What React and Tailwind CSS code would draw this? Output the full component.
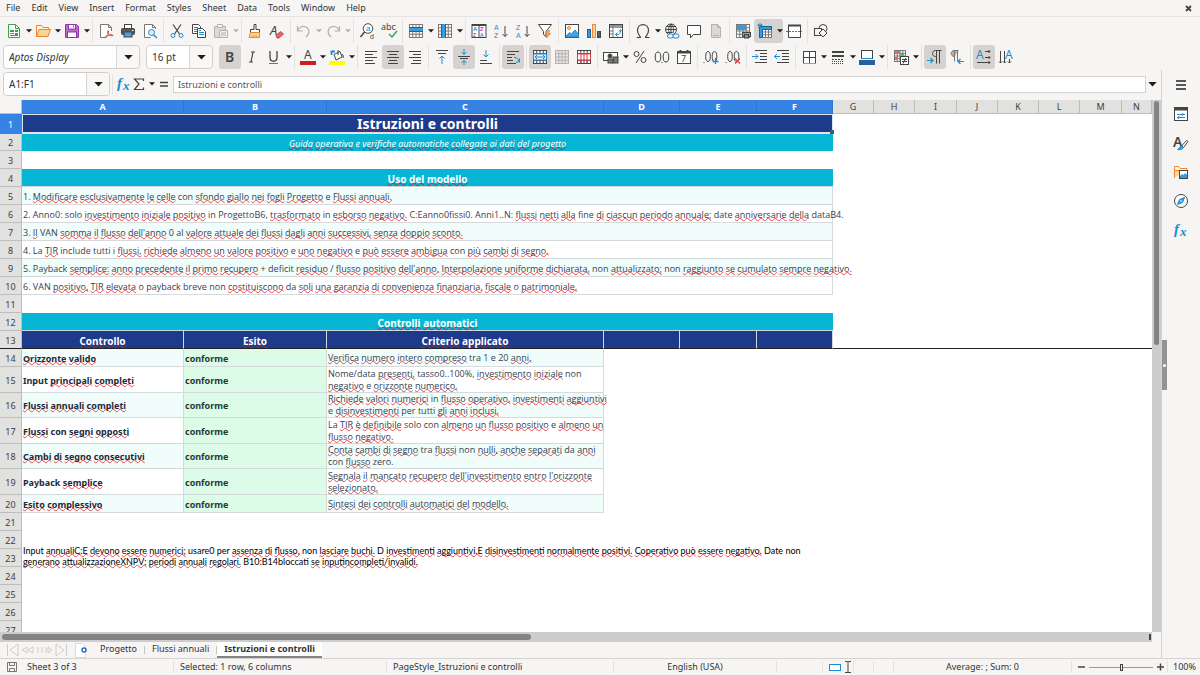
import React, { useState } from 'react';
import clsx from 'clsx';

const INK = '#444442';
const BLUE = '#1e8bcd';
const GREY = '#797774';
const PALE = '#b4b2af';
const RED = '#e03b44';
const ORANGE = '#ed8733';

const Svg = ({ children, w = 16, h = 16, stroke = INK }) => (
  <svg width={w} height={h} viewBox={`0 0 ${w} ${h}`} fill="none" stroke={stroke} strokeWidth="1" className="block shrink-0 overflow-visible" aria-hidden="true">
    {children}
  </svg>
);

const Glyph = ({ x, y, size, fill = INK, weight = 400, italic, narrow, children }) => (
  <text x={x} y={y} fontSize={size} fill={fill} stroke="none" fontWeight={weight} fontStyle={italic ? 'italic' : 'normal'} fontFamily={narrow ? 'Liberation Sans, sans-serif' : 'Noto Sans, sans-serif'}>
    {children}
  </text>
);

const Grid = ({ c = GREY, x = 1.5, y = 1.5, w = 13, h = 13, fill = '#fff' }) => (
  <>
    <rect x={x} y={y} width={w} height={h} fill={fill} stroke={c} />
    <path stroke={c} d={`M${x + w / 4} ${y}v${h}M${x + w / 2} ${y}v${h}M${x + (w * 3) / 4} ${y}v${h}M${x} ${y + h / 4}h${w}M${x} ${y + h / 2}h${w}M${x} ${y + (h * 3) / 4}h${w}`} />
  </>
);

const ICONS = {
  newDoc: (
    <Svg stroke="#3f9e4d">
      <path d="M2.500 1.500h7l4 4v9h-11z" fill="#fff" /><path d="M9.500 1.500v4h4" />
      <rect x="4" y="7" width="8" height="6" fill="#3f9e4d" stroke="none" />
      <path stroke="#fff" d="M4 9.500h8M4 11.500h5M8.500 7v4" />
    </Svg>
  ),
  open: (
    <Svg stroke={ORANGE}>
      <path d="M1.500 13.500v-11h5l1.500 2h5.500v2" fill="#fdf6e8" /><path d="M1.500 13.500l2.500-7h11.500l-2.500 7z" fill="#f9d694" />
    </Svg>
  ),
  save: (
    <Svg stroke="#9036a8">
      <path d="M1.500 1.500h11l2 2v11h-13z" fill="#b86bcb" /><rect x="4.500" y="1.500" width="7" height="4.500" fill="#fff" />
      <rect x="3.500" y="9" width="9" height="5.500" fill="#fff" /><path d="M9.500 2.500v2" />
    </Svg>
  ),
  pdf: (
    <Svg stroke={GREY}>
      <path d="M13.500 8V4.500l-3-3h-8v13h6" fill="#fff" /><path d="M10.500 1.500v3h3" />
      <path stroke={RED} d="M7 14.500c2-1 4-4.500 3.500-6.500-.8-1-1.200.5-.5 2 1 2.500 3.500 3 5 2.500-.5-1.500-5-.5-8 2z" />
    </Svg>
  ),
  print: (
    <Svg>
      <rect x="4.500" y="1.500" width="7" height="4" fill="#fff" /><rect x="1.500" y="5.500" width="13" height="6" rx="1" fill="#5c5a57" />
      <rect x="4" y="9" width="8" height="5" fill="#4aa3df" stroke={INK} /><path stroke="#fff" d="M12 7.500h1.500" />
    </Svg>
  ),
  preview: (
    <Svg stroke={GREY}>
      <path d="M13.500 6V4.500l-3-3h-8v13h6" fill="#fff" /><path d="M10.500 1.500v3h3" />
      <circle cx="9.500" cy="9.500" r="3" stroke={BLUE} fill="#d8ecf8" /><path stroke={BLUE} strokeWidth="1.500" d="M11.500 12l3.500 3" />
    </Svg>
  ),
  cut: (
    <Svg>
      <path strokeWidth="1.200" d="M4 1.500l6.500 9.500M12 1.500L5.500 11" /><circle cx="4" cy="12.500" r="2" stroke={BLUE} /><circle cx="12" cy="12.500" r="2" stroke={BLUE} />
    </Svg>
  ),
  copy: (
    <Svg>
      <path fill="#fff" d="M1.500 1.500h6l2 2v7h-8z" /><path stroke={BLUE} d="M3 4.500h4M3 6.500h3M3 8.500h3" />
      <path fill="#fff" d="M6.500 5.500h5l3 3v6h-8z" /><path stroke={BLUE} d="M8 9.500h5M8 11.500h5M8 7.500h2" />
    </Svg>
  ),
  paste: (
    <Svg stroke={PALE}>
      <path fill="#dcdad8" d="M1.500 3.500h11v11h-11z" /><path fill="#f6f5f4" d="M4.500 1.500h5v3h-5z" /><path fill="#eee" d="M6.500 7.500h8v7h-8z" /><path d="M8 10h5M8 12h5" />
    </Svg>
  ),
  brush: (
    <Svg>
      <path fill="#fff" d="M7 1.500h2v5h3.500v3h-9v-3H7z" /><path stroke={ORANGE} fill="#f9d694" d="M3.500 9.500h9v5h-10.500z" /><path stroke={ORANGE} d="M6 14v-2M9 14v-2" />
    </Svg>
  ),
  clear: (
    <Svg>
      <Glyph x="1" y="12" size="13" italic>A</Glyph><path stroke={RED} fill="#e8646b" d="M7 12.500l4.500-4 3 2.500-4.500 4h-2z" />
    </Svg>
  ),
  undo: <Svg stroke={PALE}><path strokeWidth="1.200" d="M1.500 3v5H6.500M1.500 8c1.500-4 5-5.500 8.500-4s4 7 0 10" /></Svg>,
  redo: <Svg stroke={PALE}><path strokeWidth="1.200" d="M14.500 3v5H9.500M14.500 8c-1.500-4-5-5.500-8.500-4s-4 7 0 10" /></Svg>,
  find: (
    <Svg>
      <circle cx="9" cy="5.500" r="4.800" fill="#fff" /><path strokeWidth="1.500" d="M5.500 9L1.500 14" />
      <Glyph x="7" y="8" size="8" narrow fill={BLUE}>a</Glyph><Glyph x="11" y="16" size="7" narrow>d</Glyph>
    </Svg>
  ),
  spell: (
    <Svg w={17}>
      <Glyph x="0" y="7" size="9">abc</Glyph><path stroke="#3f9e4d" strokeWidth="1.400" d="M8 11l3 3 5-6" />
    </Svg>
  ),
  row: <Svg><Grid /><rect x="1" y="5" width="14" height="4" fill="#3a9bdc" stroke="none" /><path stroke="#1565a0" d="M1 4.500h14M1 8.500h14" /></Svg>,
  col: <Svg><Grid /><rect x="5" y="1" width="4" height="14" fill="#3a9bdc" stroke="none" /><path stroke="#1565a0" d="M4.500 1v14M8.500 1v14" /></Svg>,
  sort: (
    <Svg>
      <rect x="1" y="1.500" width="14" height="13" fill="#fff" /><path strokeWidth="2" d="M1 2h14" /><path d="M8 2v13" />
      <Glyph x="2" y="8" size="6" narrow weight={600} fill={BLUE}>A</Glyph><Glyph x="2" y="14" size="5" narrow weight={600} fill="#b23bc4">Z</Glyph>
      <Glyph x="9" y="8" size="6" narrow weight={600} fill="#b23bc4">Z</Glyph><Glyph x="9" y="14" size="5" narrow weight={600} fill={BLUE}>A</Glyph>
    </Svg>
  ),
  az: (
    <Svg><Glyph x="1" y="7" size="7" narrow fill={BLUE}>A</Glyph><Glyph x="1" y="15" size="7" narrow fill="#b23bc4">Z</Glyph><path d="M12 3v10.500M9.500 11l2.500 2.500 2.500-2.500" /></Svg>
  ),
  za: (
    <Svg><Glyph x="1" y="7" size="7" narrow fill="#b23bc4">Z</Glyph><Glyph x="1" y="15" size="7" narrow fill={BLUE}>A</Glyph><path d="M12 3v10.500M9.500 11l2.500 2.500 2.500-2.500" /></Svg>
  ),
  filter: (
    <Svg><path fill="#fff" d="M1.500 1.500h13L9 8.500v5l-2.500-2v-3z" /><path stroke={ORANGE} fill="#f9b75c" d="M11.500 7.500l-3 4h2l-1 3.500 4-4.500h-2l1-3z" /></Svg>
  ),
  image: (
    <Svg><rect x="1.500" y="1.500" width="13" height="13" fill="#fff" /><circle cx="5" cy="5" r="1.500" stroke={ORANGE} fill="#f9d694" /><path stroke={BLUE} fill="#4aa3df" d="M2 13l3.500-3.500 2 1.500 3.500-4 3.500 4.500V14H2z" /></Svg>
  ),
  chart: (
    <Svg><rect x="1.500" y="6.500" width="3" height="8" fill="#3a9bdc" stroke="#1565a0" /><rect x="6.500" y="1.500" width="3" height="13" fill="#f9d694" stroke={ORANGE} /><rect x="11.500" y="8.500" width="3" height="6" fill="#5c5a57" /></Svg>
  ),
  pivot: (
    <Svg><rect x="1.500" y="1.500" width="13" height="13" fill="#fff" /><rect x="2" y="2" width="12" height="3" fill="#9a9896" stroke="none" /><path stroke={GREY} d="M5 2v12M2 8h3M2 11h3" /><path stroke={BLUE} d="M7.500 11.500h2c2 0 3-1 3-4M7.500 11.500l2-1.500M7.500 11.500l2 2M11 8.500l1.500-2 1.500 2" /></Svg>
  ),
  omega: <Svg><path strokeWidth="1.200" d="M1.500 14.500h4c-.3-1.500-3-3-3-7C2.500 4 5 1.700 8 1.700S13.500 4 13.500 7.500c0 4-2.700 5.500-3 7h4" /></Svg>,
  link: (
    <Svg><circle cx="7" cy="6.500" r="5.500" /><path d="M7 1v9M1.500 6.500h11M2.500 3.500h9M2.500 9.500h6M7 1C4 4 4 8 6 11M7 1c3 3 3 6 2 9" /><rect x="3.500" y="11" width="6" height="4" rx="2" stroke={BLUE} fill="#f6f5f4" /><rect x="9" y="11" width="6" height="4" rx="2" stroke={BLUE} fill="#f6f5f4" /></Svg>
  ),
  comment: <Svg><path fill="#fff" d="M1.500 2.500h13v9h-7L4.500 15v-3.500h-3z" /></Svg>,
  header: <Svg stroke={PALE}><path fill="#dcdad8" d="M3.500 1.500h6l3 3v10h-9z" /><path d="M9.500 1.500v3h3M5 12.500h6" /></Svg>,
  printRange: (
    <Svg><Grid /><rect x="2" y="2" width="9" height="5" fill="#3a9bdc" stroke="none" /><rect x="7.500" y="9.500" width="8" height="4" fill="#8aa" /><rect x="9.500" y="11.500" width="4" height="3.500" fill="#4aa3df" /></Svg>
  ),
  freeze: (
    <Svg><Grid x={2.500} y={3.500} w={12} h={11} /><path fill="#3a9bdc" stroke="#1565a0" d="M2.500 3.500h12v3h-9v8h-3z" /><path stroke={BLUE} d="M3 0v5M.5 2.500h5M1 1l4 4M5 1L1 5" /></Svg>
  ),
  split: <Svg><path fill="#fff" d="M2.500 2.500h12v12h-12z" /><path strokeWidth="2" d="M2 2.500h13" /><path stroke={BLUE} strokeDasharray="2 1" d="M0 8.500h16" /></Svg>,
  shapes: <Svg><circle cx="10" cy="5.500" r="4" /><rect x="1.500" y="5.500" width="7" height="7" fill="#f6f5f4" /><path fill="#f6f5f4" d="M10 6l4 4-4 4-4-4z" /></Svg>,
  bold: <Svg><Glyph x="3" y="13" size="14" weight={600}>B</Glyph></Svg>,
  italic: <Svg><path strokeWidth="1.200" d="M7 3h4M5 13h4M9 3L7 13" /></Svg>,
  underline: <Svg><path strokeWidth="1.300" d="M4 2v6.500c0 5 7 5 7 0V2" /><path stroke={BLUE} d="M3 14.500h9" /></Svg>,
  fontColor: <Svg><Glyph x="4" y="10" size="12">A</Glyph><rect x="0" y="12" width="16" height="4" fill="#c9211e" stroke="none" /></Svg>,
  fill: (
    <Svg><rect x="0" y="12" width="16" height="4" fill="#ffff00" stroke="none" /><path fill="#fff" d="M5 5.500l6-3 2 5.500-6 3z" /><path d="M9 1v5M13 5c1.500 1 1.500 3 1 4" /><path stroke={BLUE} strokeWidth="1.800" d="M6 2.500H2.500v3.500" /></Svg>
  ),
  alignL: <Svg><path d="M2 2.500h12M2 5.500h8M2 8.500h12M2 11.500h8M2 14.500h10" /></Svg>,
  alignC: <Svg><path d="M2 2.500h12M4 5.500h8M2 8.500h12M4 11.500h8M3 14.500h10" /></Svg>,
  alignR: <Svg><path d="M2 2.500h12M6 5.500h8M2 8.500h12M6 11.500h8M4 14.500h10" /></Svg>,
  top: <Svg><path d="M2 1.500h12M4 4.500h8" /><path stroke={BLUE} d="M8 15V7M5.500 9.500L8 7l2.500 2.500" /></Svg>,
  middle: <Svg><path d="M2 7.500h12M4 9.500h8" /><path stroke={BLUE} d="M8 0v5.500M5.500 3L8 5.500 10.500 3M8 16v-4.500M5.500 14L8 11.500l2.500 2.500" /></Svg>,
  bottom: <Svg><path d="M2 14.500h12M2 11.500h7" /><path stroke={BLUE} d="M8 1v7M5.500 5.500L8 8l2.500-2.500" /></Svg>,
  wrap: <Svg><path d="M2 2.500h12M2 5.500h8M2 8.500h5M2 11.500h6M2 14.500h9" /><path stroke={BLUE} d="M9 8.500c3 0 4 1 5 4M14.500 9.500v3.500H11" /></Svg>,
  merge: <Svg><Grid c={INK} /><rect x="1.500" y="5" width="13" height="6" fill="#e4f1fa" stroke={BLUE} /><path stroke={BLUE} d="M3 8h10M5 6L3 8l2 2M11 6l2 2-2 2" /></Svg>,
  mergeOff: <Svg><Grid c={PALE} fill="#e8e7e5" /></Svg>,
  splitCells: <Svg><Grid c={INK} /><rect x="1.500" y="5" width="13" height="6" fill="#fff" stroke={RED} /><path stroke={RED} d="M5 5v6M8 5v6M11 5v6M5 11v3M11 11v3" /></Svg>,
  currency: <Svg><rect x=".5" y="3.500" width="14" height="8" fill="#fff" /><circle cx="7" cy="7" r="2" fill={INK} /><rect x="10" y="8" width="5" height="6" fill={GREY} stroke={INK} /><rect x="5" y="10" width="5" height="4" fill={GREY} stroke={INK} /></Svg>,
  percent: <Svg><circle cx="4.500" cy="5" r="2.500" /><circle cx="11.500" cy="11" r="2.500" /><path d="M12 2L4 14" /></Svg>,
  number: <Svg><ellipse cx="4" cy="8" rx="2.800" ry="5" /><ellipse cx="12" cy="8" rx="2.800" ry="5" /><path d="M7.500 13.500h1" /></Svg>,
  date: <Svg><rect x="1.500" y="2.500" width="13" height="12" fill="#fff" /><path strokeWidth="2" d="M1.500 3.500h13M4.500 1v3M11.500 1v3" /><Glyph x="5" y="13" size="9">7</Glyph></Svg>,
  decAdd: <Svg><path d="M.5 13.500h1" /><ellipse cx="5" cy="7.500" rx="2.300" ry="5" /><ellipse cx="11.500" cy="7.500" rx="2.300" ry="5" /><path stroke={BLUE} strokeWidth="1.300" d="M12.500 9v6M9.500 12.500h6" /></Svg>,
  decDel: <Svg><path d="M.5 13.500h1" /><ellipse cx="5" cy="7.500" rx="2.300" ry="5" /><ellipse cx="11.500" cy="7.500" rx="2.300" ry="5" /><path stroke={RED} strokeWidth="1.300" d="M10 9.500l5 5M15 9.500l-5 5" /></Svg>,
  indent: <Svg><path d="M3 1.500h12M8 4.500h7M8 7.500h7M8 10.500h7M3 13.500h12" /><path stroke={BLUE} d="M0 7.500h6M3.500 5L6 7.500 3.500 10" /></Svg>,
  outdent: <Svg><path d="M3 1.500h12M8 4.500h7M8 7.500h7M8 10.500h7M3 13.500h12" /><path stroke={BLUE} d="M0 7.500h6M3 5L.5 7.500 3 10" /></Svg>,
  borders: <Svg><rect x="2.500" y="2.500" width="12" height="12" fill="#fff" /><path d="M8.500 2.500v12M2.500 8.500h12" /><path stroke={ORANGE} d="M2 14.500h13" /></Svg>,
  lineStyle: <Svg><path strokeWidth="2" d="M2 3h12M2 7h12" /><path strokeDasharray="2 1" d="M2 10.500h12" /><path strokeDasharray="1 1" d="M2 14.500h12M2 12.500h12" /></Svg>,
  lineColor: <Svg><rect x="2.500" y="1.500" width="11" height="8" fill="#fff" /><path fill="#cfe3f5" stroke={BLUE} d="M2.500 9.500h11" /><rect x="0" y="11" width="16" height="5" fill="#2a6099" stroke="none" /></Svg>,
  cond: <Svg><Grid w={11} h={11} /><rect x="2" y="2" width="5" height="3" fill="#e8646b" stroke="none" /><rect x="6" y="5" width="5" height="3" fill="#5dbb6a" stroke="none" /><rect x="2" y="8" width="3" height="3" fill="#e8646b" stroke="none" /><rect x="7.500" y="7.500" width="8" height="8" fill="#fff" /><path d="M9 10.500h5M9 12.500h5M13 9l-3 5.500" /></Svg>,
  ltr: <Svg><path d="M14.500 1.500H8.500c-4 0-4 6 0 6h1M9.500 1.500v13M12.500 1.500v13" /><path stroke={BLUE} strokeWidth="1.200" d="M0 11.500h6M3.500 9L6 11.500 3.500 14" /></Svg>,
  rtl: <Svg stroke={GREY}><path fill={PALE} d="M9.500 1.500H5.500c-4.500 0-4.500 6 0 6" /><path d="M5.500 1.500v11M8.500 1.500v11" /><path stroke={BLUE} strokeWidth="1.200" d="M15 12.500H9M11.500 10L9 12.500l2.500 2.500" /></Svg>,
  textLR: <Svg><Glyph x="0" y="10" size="12" fill={BLUE}>A</Glyph><path d="M9 2.500h5M9 8.500h5M1 13.500h13M12.500 1l1.500 1.500L12.500 4M12.500 7L14 8.500 12.500 10M12.500 12l1.500 1.500-1.500 1.500" /></Svg>,
  textTB: <Svg><Glyph x="7" y="10" size="12" fill={BLUE}>A</Glyph><path d="M2.500 2v12M6.500 2v12M11.500 10v4M1 12.500L2.500 14 4 12.500M5 12.500L6.500 14 8 12.500M10 12.500l1.500 1.500 1.500-1.500" /></Svg>,
  fx: <Svg><text x="1" y="12" fontSize="15" fontStyle="italic" fontWeight="600" fontFamily="Liberation Serif, serif" fill={BLUE} stroke="none">f</text><text x="7" y="14" fontSize="13" fontStyle="italic" fontWeight="600" fontFamily="Liberation Serif, serif" fill={BLUE} stroke="none">x</text></Svg>,
  sum: <Svg w={12}><path strokeWidth="1.200" d="M10.500 5V3h-9l4.500 5-4.500 5.500h9v-2" /></Svg>,
  equal: <Svg w={12}><path strokeWidth="1.500" d="M2 6.500h8M2 10h8" /></Svg>,
  hamburger: <Svg stroke="#222"><path strokeWidth="1.300" d="M3 4h10M3 8h10M3 12h10" /></Svg>,
  props: <Svg><rect x="1.500" y="1.500" width="13" height="13" fill="#fff" /><path strokeWidth="3" d="M1.500 3h13" /><path stroke={BLUE} d="M4 8.500h8M4 11.500h8M10 7l-1 3M6 10l-1 3" /></Svg>,
  styles: <Svg><Glyph x="0" y="12" size="14" weight={600}>A</Glyph><path fill="#fff" d="M8.500 11l5-5.500 1.500 1-4.500 6z" /><path fill="#3a9bdc" stroke={BLUE} d="M4.500 14.500c1.500 0 2-3 4-3.500l2 1.500c-1 2-4 2.500-6 2z" /></Svg>,
  gallery: <Svg stroke={ORANGE}><path fill="#fdf6e8" d="M1.500 13.500v-11h4l1.500 2h7v2" /><path fill="#f9d694" d="M1.500 13.500v-7h12" /><rect x="6.500" y="6.500" width="8" height="8" fill="#fff" stroke={INK} /><path fill="#3a9bdc" stroke="none" d="M7 14v-2l2-2 1.500 1L12.500 9l1.500 2v3z" /></Svg>,
  navigator: <Svg><circle cx="8" cy="8" r="6.500" fill="#fff" /><path fill="#3a9bdc" stroke={BLUE} d="M11.500 4.500L9.500 9.500 4.500 11.500 6.500 6.500z" /><circle cx="8" cy="8" r=".8" fill="#fff" stroke="none" /></Svg>,
};

const MENU = ['File', 'Edit', 'View', 'Insert', 'Format', 'Styles', 'Sheet', 'Data', 'Tools', 'Window', 'Help'];

// ">" adds a drop-down arrow, "*" marks a pressed button, "-" marks a disabled one, "|" is a separator
const STANDARD_BAR = 'newDoc> open> save> | pdf print preview | cut copy paste>- | brush clear | undo>- redo>- | find spell | row> col> | sort az za filter | image chart pivot | omega> link comment header- | printRange freeze>* split | shapes';
const FORMAT_BAR = 'bold* italic underline> | fontColor> fill> | alignL alignC* alignR | top middle* bottom | wrap* | merge* mergeOff- splitCells | currency> percent number date | decAdd decDel | indent outdent | borders> lineStyle> lineColor> | cond> | ltr* rtl | textLR* textTB';

const Caret = ({ pale, big }) => (
  <svg width={big ? 9 : 6} height={big ? 5 : 4} viewBox="0 0 10 6" className="block shrink-0" aria-hidden="true">
    <path d="M0 0h10L5 5.500z" fill={pale ? PALE : '#1c1c1c'} />
  </svg>
);

const Bar = ({ items }) => items.split(' ').map((item, i) => {
  if (item === '|') return <span key={i} className="mx-[2px] h-6 w-px shrink-0 bg-[#e4e2e0]" />;
  const [, name, flags] = item.match(/^(\w+)(.*)$/);
  return (
    <button key={i} type="button" aria-label={name} disabled={flags.includes('-')}
      className={clsx('flex h-6 shrink-0 items-center rounded-[3px] pl-[3px]', flags.includes('>') ? 'w-[29px] gap-1' : 'w-[22px]', flags.includes('*') && 'bg-[#d5d2cf]')}>
      {ICONS[name]}
      {flags.includes('>') && <Caret pale={flags.includes('-')} />}
    </button>
  );
});

const Combo = ({ label, value, onChange, className, italic }) => (
  <div className={clsx('flex h-6 shrink-0 rounded border border-[#d0cdca] bg-white', className)}>
    <input aria-label={label} value={value} onChange={(e) => onChange(e.target.value)}
      className={clsx('w-0 grow rounded-l bg-white pl-[5px] text-[10px] text-[#2e3436] outline-none', italic && 'italic')} />
    <button type="button" aria-label={`${label} list`} className="flex w-[23px] items-center justify-center rounded-r border-l border-[#d8d5d2] bg-[#f8f7f6]">
      <Caret big />
    </button>
  </div>
);

const KNOWN = new Set('con e in solo fine date La include tutti i VAN al Payback payback deficit non o breve da Input per tra D Nome/data conforme zero Date Anni E'.split(' '));

// Underlines every word the checker does not know; words with digits are skipped
const Spelled = ({ text, heavy }) => text.split(/([ \n])/).map((word, i) => {
  const bare = word.replace(/^[.(]+|[.,:;]+$/g, '');
  const ok = !bare.trim() || /^[^a-zA-Zè]*$/.test(bare) || /\d/.test(bare) || KNOWN.has(bare);
  if (ok) return word;
  return (
    <span key={i} className={clsx('underline decoration-wavy decoration-1 underline-offset-[-1px] [text-decoration-skip-ink:none]', heavy ? 'decoration-[#b3203c]' : 'decoration-[#e5484d]')}>{word}</span>
  );
});

const COLUMNS = [
  ['A', 'w-[162px]'], ['B', 'w-[143px]'], ['C', 'w-[277px]'], ['D', 'w-[76px]'], ['E', 'w-[77px]'], ['F', 'w-[76px]'],
  ['G', 'w-[41px]'], ['H', 'w-[41px]'], ['I', 'w-[42px]'], ['J', 'w-[41px]'], ['K', 'w-[41px]'], ['L', 'w-[41px]'], ['M', 'w-[42px]'], ['N', ''],
];

const RULES = [
  '1. Modificare esclusivamente le celle con sfondo giallo nei fogli Progetto e Flussi annuali.',
  '2. Anno0: solo investimento iniziale positivo in ProgettoB6, trasformato in esborso negativo. C:Eanno0fissi0. Anni1..N: flussi netti alla fine di ciascun periodo annuale; date anniversarie della dataB4.',
  "3. Il VAN somma il flusso dell'anno 0 al valore attuale dei flussi dagli anni successivi, senza doppio sconto.",
  '4. La TIR include tutti i flussi, richiede almeno un valore positivo e uno negativo e può essere ambigua con più cambi di segno.',
  "5. Payback semplice: anno precedente il primo recupero + deficit residuo / flusso positivo dell'anno. Interpolazione uniforme dichiarata, non attualizzato; non raggiunto se cumulato sempre negativo.",
  '6. VAN positivo, TIR elevata o payback breve non costituiscono da soli una garanzia di convenienza finanziaria, fiscale o patrimoniale.',
];

const CHECKS = [
  ['Orizzonte valido', 'Verifica numero intero compreso tra 1 e 20 anni.', 'h-[18px]'],
  ['Input principali completi', 'Nome/data presenti, tasso0..100%, investimento iniziale non\nnegativo e orizzonte numerico.', 'h-[26px]'],
  ['Flussi annuali completi', 'Richiede valori numerici in flusso operativo, investimenti aggiuntivi\ne disinvestimenti per tutti gli anni inclusi.', 'h-[25px]'],
  ['Flussi con segni opposti', 'La TIR è definibile solo con almeno un flusso positivo e almeno un\nflusso negativo.', 'h-[26px]'],
  ['Cambi di segno consecutivi', 'Conta cambi di segno tra flussi non nulli, anche separati da anni\ncon flusso zero.', 'h-[25px]'],
  ['Payback semplice', "Segnala il mancato recupero dell'investimento entro l'orizzonte\nselezionato.", 'h-[26px]'],
  ['Esito complessivo', 'Sintesi dei controlli automatici del modello.', 'h-[18px]'],
];

const NOTE = 'Input annualiC:E devono essere numerici; usare0 per assenza di flusso, non lasciare buchi. D investimenti aggiuntivi.E disinvestimenti normalmente positivi. Coperativo può essere negativo. Date non\ngenerano attualizzazioneXNPV: periodi annuali regolari. B10:B14bloccati se inputincompleti/invalidi.';

const RowHead = ({ n, active, frozen }) => (
  <th scope="row" className={clsx('border-r border-b p-0 pt-[2px] text-center text-[9px] font-normal',
    active ? 'border-[#3584e4] bg-[#3584e4] font-bold text-white' : 'border-[#bdbdbb] bg-[#e1e1e0] text-[#3d3d3d]',
    frozen && 'border-b-[#222]')}>{n}</th>
);

const Band = ({ n, children }) => (
  <tr className="h-[18px]">
    <RowHead n={n} />
    <td colSpan={6} className="border-b border-[#cfd8dc] bg-[#06b6d4] p-0 pt-[2px] text-center text-[10px] font-bold text-white"><Spelled text={children} heavy /></td>
  </tr>
);

const EmptyRow = ({ n }) => <tr className="h-[18px]"><RowHead n={n} /><td colSpan={14} className="p-0" /></tr>;

const Sheet = () => (
  <table className="w-full table-fixed border-separate border-spacing-0 text-[9px] leading-[12px] text-[#374151]">
    <colgroup>
      <col className="w-[22px]" />
      {COLUMNS.map(([name, width]) => <col key={name} className={width} />)}
    </colgroup>
    <thead>
      <tr className="h-[14px]">
        <td className="border-r border-b border-[#bdbdbb] bg-[#f6f5f4] p-0" />
        {COLUMNS.map(([name], i) => (
          <th key={name} scope="col" className={clsx('border-r border-b p-0 text-[9px] leading-[13px]',
            i < 6 ? 'border-[#2f76cd] bg-[#3584e4] font-bold text-white' : 'border-[#bdbdbb] bg-[#e1e1e0] font-normal text-[#3d3d3d]')}>{name}</th>
        ))}
      </tr>
    </thead>
    <tbody>
      <tr className="h-[20px]">
        <RowHead n={1} active />
        <td colSpan={6} className="relative border border-b-2 border-[#dfe3ee] bg-[#1e3a8a] p-0 text-center text-[14px] leading-[17px] font-bold text-white">
          <Spelled text="Istruzioni e controlli" heavy />
          <span className="absolute -right-[2px] -bottom-[2px] size-[4px] bg-[#555]" />
        </td>
      </tr>
      <tr className="h-[17px]">
        <RowHead n={2} />
        <td colSpan={6} className="bg-[#06b6d4] p-0 pt-[2px] text-center text-white italic">
          <Spelled text="Guida operativa e verifiche automatiche collegate ai dati del progetto" heavy />
        </td>
      </tr>
      <EmptyRow n={3} />
      <Band n={4}>Uso del modello</Band>
      {RULES.map((rule, i) => (
        <tr key={rule} className="h-[18px]">
          <RowHead n={i + 5} />
          <td colSpan={6} className={clsx("border-r border-b border-[#d5dadd] p-0 pt-[2px] pl-px font-['Open_Sans',sans-serif] whitespace-nowrap", i % 2 === 0 && 'bg-[#f0fdfa]')}><Spelled text={rule} /></td>
        </tr>
      ))}
      <EmptyRow n={11} />
      <Band n={12}>Controlli automatici</Band>
      <tr className="h-[18px]">
        <RowHead n={13} frozen />
        {['Controllo', 'Esito', 'Criterio applicato', '', '', ''].map((title, i) => (
          <td key={i} className="border-r border-b border-[#cfd8dc] border-b-[#222] bg-[#1e3a8a] p-0 pt-[2px] text-center text-[10px] font-bold text-white"><Spelled text={title} heavy /></td>
        ))}
        <td colSpan={8} className="border-b border-[#222] p-0" />
      </tr>
      {CHECKS.map(([name, rule, height], i) => (
        <tr key={name} className={height}>
          <RowHead n={i + 14} />
          <td className={clsx('border-r border-b border-[#d5dadd] p-0 pt-[2px] pl-px font-bold text-[#1f2937]', i % 2 === 0 && 'bg-[#f0fdfa]')}><Spelled text={name} /></td>
          <td className="border-r border-b border-[#d5dadd] bg-[#dcfce7] p-0 pt-[2px] pl-px font-bold text-[#1f3a34]">conforme</td>
          <td className={clsx("border-r border-b border-[#d5dadd] p-0 pl-px font-['Open_Sans',sans-serif] whitespace-pre", i % 2 === 0 && 'bg-[#f0fdfa]')}><Spelled text={rule} /></td>
        </tr>
      ))}
      <EmptyRow n={21} />
      <tr className="h-[18px]">
        <RowHead n={22} />
        <td rowSpan={2} colSpan={6} className="p-0 pl-px align-bottom font-['Lato','Noto_Sans',sans-serif] text-[9px] leading-[11px] whitespace-pre text-black"><Spelled text={NOTE} /></td>
      </tr>
      <tr className="h-[18px]"><RowHead n={23} /></tr>
      {[24, 25, 26, 27].map((n) => <EmptyRow key={n} n={n} />)}
    </tbody>
  </table>
);

const TabArrows = () => (
  <Svg w={62} h={14} stroke="#cfcdca">
    <path d="M1.500 1v12M12 1L4 7l8 6zM21 4l-5 3 5 3zM27 4l-5 3 5 3zM32 4v6M36 4v6M40 4v6M42 4l4 3-4 3zM50 1l8 6-8 6zM60.500 1v12" />
  </Svg>
);

const App = () => {
  const [font, setFont] = useState('Aptos Display');
  const [size, setSize] = useState('16 pt');
  const [cell, setCell] = useState('A1:F1');
  const [formula, setFormula] = useState('Istruzioni e controlli');
  const [zoom, setZoom] = useState(50);
  const [tab, setTab] = useState('Istruzioni e controlli');

  return (
    <div className="flex h-screen flex-col overflow-hidden bg-[#f6f5f4] font-['Noto_Sans',sans-serif] text-[9px] text-[#2e3436]">
      <nav className="flex h-[17px] shrink-0 items-center gap-[11px] border-b border-[#e6e4e2] pl-[6px]">
        {MENU.map((name) => <button key={name} type="button">{name}</button>)}
        <button type="button" aria-label="Close" className="mr-2 ml-auto">
          <Svg w={7} h={7}><path strokeWidth="1.800" d="M1 1l5 5M6 1L1 6" /></Svg>
        </button>
      </nav>

      <div className="flex h-[27px] shrink-0 items-center pl-[3px]"><Bar items={STANDARD_BAR} /></div>
      <div className="flex h-[26px] shrink-0 items-center pl-[3px]">
        <Combo label="Font name" value={font} onChange={setFont} className="mr-[6px] w-[137px]" italic />
        <Combo label="Font size" value={size} onChange={setSize} className="mr-[6px] w-[67px]" />
        <Bar items={FORMAT_BAR} />
      </div>

      <div className="flex min-h-0 grow">
        <div className="flex min-w-0 grow flex-col">
          <div className="flex h-[30px] shrink-0 items-center pb-[2px] pl-[3px]">
            <Combo label="Name box" value={cell} onChange={setCell} className="w-[107px]" />
            <span className="mx-[2px] h-5 w-px bg-[#e4e2e0]" />
            <button type="button" aria-label="Function wizard" className="px-px">{ICONS.fx}</button>
            <button type="button" aria-label="Select function" className="flex items-center gap-1">{ICONS.sum}<Caret /></button>
            <button type="button" aria-label="Formula" className="px-[3px]">{ICONS.equal}</button>
            <input aria-label="Formula line" value={formula} onChange={(e) => setFormula(e.target.value)}
              className="h-[17px] min-w-0 grow border border-[#d5d2cf] bg-white pl-1 text-[9px] text-[#555] outline-none" />
            <button type="button" aria-label="Expand formula bar" className="flex w-[15px] shrink-0 items-center pl-[2px]"><Caret big /></button>
          </div>

          <div className="flex min-h-0 grow">
            <main className="min-w-0 grow overflow-hidden bg-white"><Sheet /></main>
            <div className="w-[9px] shrink-0 bg-[#cdcdcd] px-[2px] pt-px"><div className="h-[46%] rounded-full bg-[#828483]" /></div>
          </div>

          <div className="mr-[9px] flex h-[10px] shrink-0 items-center justify-between bg-[#cdcdcd] pl-[2px]">
            <div className="h-[6px] w-[46%] rounded-full bg-[#828483]" />
            <span className="mr-px h-[6px] w-[2px] bg-[#444]" />
          </div>

          <div className="flex h-[16px] shrink-0 items-center">
            <div className="w-[75px] pl-[6px]"><TabArrows /></div>
            <button type="button" aria-label="Add sheet" className="mr-[6px] h-[15px] w-[12px]">
              <Svg w={12} h={15} stroke="#dddbd8"><path fill="#fff" d="M.5.5h7l3 3v11H.5z" /><circle cx="9" cy="7" r="2" stroke="#2a6fc0" strokeWidth="1.500" /></Svg>
            </button>
            {['Progetto', 'Flussi annuali', 'Istruzioni e controlli'].map((name) => (
              <React.Fragment key={name}>
                <button type="button" onClick={() => setTab(name)}
                  className={clsx('h-[16px] border-b-2 px-[7px]', name === tab ? 'border-[#828483] bg-white font-bold' : 'border-transparent')}>
                  <span>{name}</span>
                </button>
                {name !== 'Istruzioni e controlli' && <span className="h-2 w-px bg-[#c4c2bf]" />}
              </React.Fragment>
            ))}
          </div>
        </div>

        <aside className="relative flex w-[39px] shrink-0 flex-col items-center gap-[13px] border-l border-[#d5d2cf] pt-[7px]">
          {['hamburger', 'props', 'styles', 'gallery', 'navigator', 'fx'].map((name) => (
            <button key={name} type="button" aria-label={name}>{ICONS[name]}</button>
          ))}
          <button type="button" aria-label="Hide sidebar" className="absolute top-[46%] left-0 flex h-[50px] w-[5px] items-center justify-center bg-[#929493]">
            <span className="size-[3px] rounded-full bg-white" />
          </button>
        </aside>
      </div>

      <footer className="grid h-[17px] shrink-0 grid-cols-[173fr_213fr_227fr_163fr_46px_31px_20px_20px_178fr_96px_33px] items-center border-t border-[#d5d2cf] [&>*]:flex [&>*]:h-3 [&>*]:items-center [&>*+*]:border-l [&>*+*]:border-[#e4e2e0]">
        <div className="gap-[9px] pl-[6px]">
          <Svg w={12} h={12} stroke={GREY}><path d="M1.500 1.500h9v9h-9zM3.500 1.500v3h5v-3M3.500 10.500v-3h5v3" /></Svg>
          <span>Sheet 3 of 3</span>
        </div>
        <div className="pl-[6px]">Selected: 1 row, 6 columns</div>
        <div className="pl-[6px]">PageStyle_Istruzioni e controlli</div>
        <div className="justify-center">English (USA)</div>
        <div />
        <div className="gap-1 pl-[6px]">
          <Svg w={12} h={8} stroke={BLUE}><rect x=".5" y="1.500" width="11" height="6" fill="#fff" /></Svg>
          <Svg w={6} h={12}><path d="M0 .5h2.500L3 1l.5-.5H6M3 1v10M0 11.500h6" /></Svg>
        </div>
        <div />
        <div />
        <div className="justify-center">Average: ; Sum: 0</div>
        <div className="gap-1 pl-[6px]">
          <button type="button" aria-label="Zoom out"><Svg w={7} h={8}><path strokeWidth="1.500" d="M0 4h7" /></Svg></button>
          <input type="range" aria-label="Zoom" value={zoom} onChange={(e) => setZoom(e.target.value)}
            className="h-[8px] w-[64px] appearance-none bg-transparent [&::-webkit-slider-runnable-track]:h-px [&::-webkit-slider-runnable-track]:bg-[#9a9a98] [&::-webkit-slider-thumb]:-mt-[3px] [&::-webkit-slider-thumb]:h-[7px] [&::-webkit-slider-thumb]:w-[3px] [&::-webkit-slider-thumb]:appearance-none [&::-webkit-slider-thumb]:border [&::-webkit-slider-thumb]:border-[#444] [&::-webkit-slider-thumb]:bg-[#eee]" />
          <button type="button" aria-label="Zoom in"><Svg w={7} h={8}><path strokeWidth="1.500" d="M0 4h7M3.500 .5v7" /></Svg></button>
        </div>
        <div className="pl-[5px]">100%</div>
      </footer>
    </div>
  );
};

export default App;
